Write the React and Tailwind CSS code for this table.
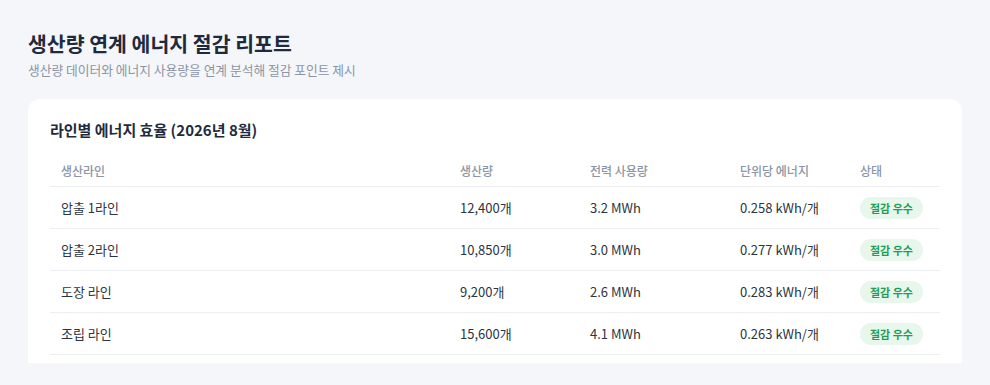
const rows = [
  { line: '압출 1라인', qty: '12,400개', power: '3.2 MWh', unit: '0.258 kWh/개' },
  { line: '압출 2라인', qty: '10,850개', power: '3.0 MWh', unit: '0.277 kWh/개' },
  { line: '도장 라인', qty: '9,200개', power: '2.6 MWh', unit: '0.283 kWh/개' },
  { line: '조립 라인', qty: '15,600개', power: '4.1 MWh', unit: '0.263 kWh/개' },
];

export default function App() {
  return (
    <div
      className="min-h-[385px] bg-[#f5f6fa] px-[28px] pt-[29px]"
      style={{ fontFamily: '"Noto Sans CJK KR", "Noto Sans", sans-serif' }}
    >
      <h1 className="text-[20.5px] leading-[28px] font-bold text-[#1e2b3c]">생산량 연계 에너지 절감 리포트</h1>
      <p className="mt-[3px] text-[12.75px] leading-[20px] text-[#8b95a5]">생산량 데이터와 에너지 사용량을 연계 분석해 절감 포인트 제시</p>

      <div className="mt-[19px] w-[934px] bg-white rounded-t-[12px] px-[22px] pt-[20px] pb-[8px]">
        <h3 className="text-[15px] leading-[22px] font-bold text-[#1e2b3c] mb-[10px]">라인별 에너지 효율 (2026년 8월)</h3>
        <table className="w-full text-left table-fixed">
          <thead>
            <tr className="border-b border-[#eceef2] text-[12px] leading-[18px] text-[#8b95a5]">
              <th className="font-medium pl-[11px] pt-[11px] pb-[6px] w-[399px]">생산라인</th>
              <th className="font-medium pl-[11px] pt-[11px] pb-[6px] w-[130px]">생산량</th>
              <th className="font-medium pl-[11px] pt-[11px] pb-[6px] w-[150px]">전력 사용량</th>
              <th className="font-medium pl-[11px] pt-[11px] pb-[6px] w-[120px]">단위당 에너지</th>
              <th className="font-medium pl-[11px] pt-[11px] pb-[6px]">상태</th>
            </tr>
          </thead>
          <tbody>
            {rows.map((r, i) => (
              <tr key={i} className="h-[42px] border-b border-[#eceef2] text-[13px] text-[#2b3442]">
                <td className="pl-[11px]">{r.line}</td>
                <td className="pl-[11px]">{r.qty}</td>
                <td className="pl-[11px]">{r.power}</td>
                <td className="pl-[11px]">{r.unit}</td>
                <td className="pl-[11px]">
                  <span className="inline-block px-[10px] leading-[22px] rounded-full bg-[#e7f7ec] text-[#1f9d55] text-[11px] font-bold">절감 우수</span>
                </td>
              </tr>
            ))}
          </tbody>
        </table>
      </div>
    </div>
  );
}
